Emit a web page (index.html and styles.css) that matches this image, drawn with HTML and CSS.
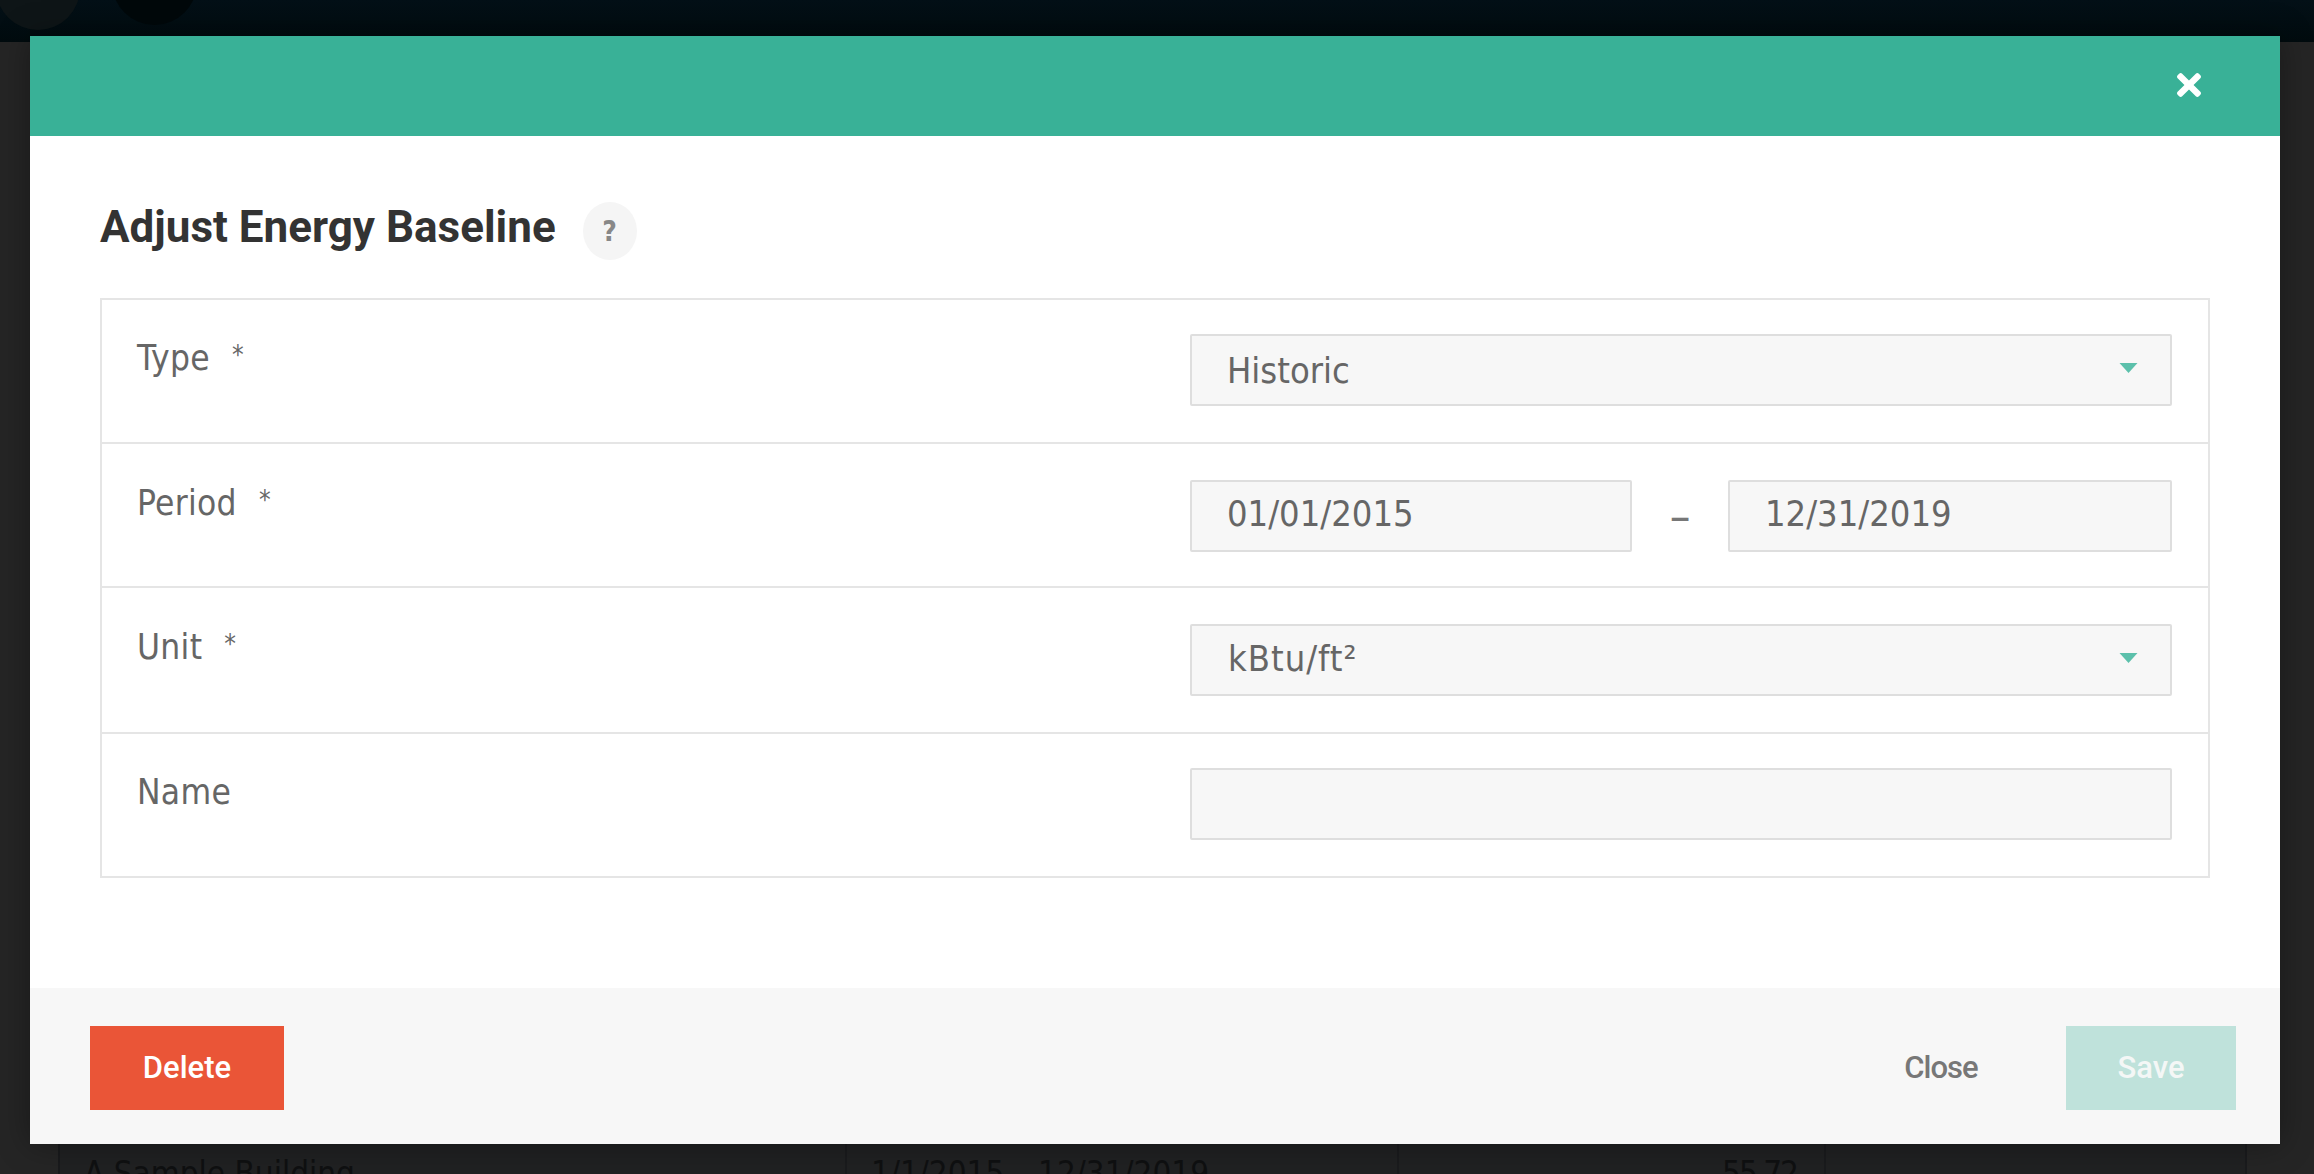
FILE: index.html
```html
<!DOCTYPE html>
<html lang="en">
<head>
<meta charset="utf-8">
<title>Adjust Energy Baseline</title>
<link rel="stylesheet" href="styles.css">
</head>
<body>
<div class="page">
  <header class="topbar">
    <span class="avatar avatar-a"></span>
    <span class="avatar avatar-b"></span>
  </header>
  <main class="backdrop">
    <div class="bg-table">
      <div class="bg-cell bg-name">A Sample Building</div>
      <div class="bg-cell bg-period">1/1/2015 – 12/31/2019</div>
      <div class="bg-cell bg-value">55.72</div>
      <div class="bg-cell bg-last"></div>
    </div>
  </main>
</div>
<section class="modal">
  <div class="modal-head">
    <svg class="close-x" viewBox="0 80 352 352"><path d="M242.72 256l100.07-100.07c12.28-12.28 12.28-32.19 0-44.48l-22.24-22.24c-12.28-12.28-32.19-12.28-44.48 0L176 189.28 75.93 89.21c-12.28-12.28-32.19-12.28-44.48 0L9.21 111.45c-12.28 12.28-12.28 32.19 0 44.48L109.28 256 9.21 356.07c-12.28 12.28-12.28 32.19 0 44.48l22.24 22.24c12.28 12.28 32.2 12.28 44.48 0L176 322.72l100.07 100.07c12.28 12.28 32.2 12.28 44.48 0l22.24-22.24c12.28-12.28 12.28-32.19 0-44.48L242.72 256z"/></svg>
  </div>
  <div class="modal-body">
    <div class="title-row">
      <h1 class="title">Adjust Energy Baseline</h1>
      <span class="help">?</span>
    </div>
    <div class="form">
      <div class="row">
        <div class="label">Type<span class="req">*</span></div>
        <div class="field"><div class="control select"><span>Historic</span><svg class="caret" viewBox="0 0 18 10"><path d="M0 0h18L9 10z"/></svg></div></div>
      </div>
      <div class="row">
        <div class="label">Period<span class="req">*</span></div>
        <div class="field dates">
          <input class="control date date-from" value="01/01/2015">
          <span class="dash">–</span>
          <input class="control date" value="12/31/2019">
        </div>
      </div>
      <div class="row">
        <div class="label">Unit<span class="req">*</span></div>
        <div class="field"><div class="control select unit"><span>kBtu/ft²</span><svg class="caret" viewBox="0 0 18 10"><path d="M0 0h18L9 10z"/></svg></div></div>
      </div>
      <div class="row">
        <div class="label">Name</div>
        <div class="field"><input class="control" value=""></div>
      </div>
    </div>
  </div>
  <footer class="modal-foot">
    <button class="btn btn-delete">Delete</button>
    <div class="foot-right">
      <button class="btn btn-close">Close</button>
      <button class="btn btn-save">Save</button>
    </div>
  </footer>
</section>
</body>
</html>
```
FILE: styles.css
```css
* { box-sizing: border-box; }
html, body { margin: 0; height: 100%; }
body {
  overflow: hidden;
  background: #252525;
  font-family: "DejaVu Sans Condensed", "DejaVu Sans", sans-serif;
  color: #666;
}
.page { height: 1174px; display: flex; flex-direction: column; }
.topbar {
  height: 42px;
  background: linear-gradient(#031017, #010b0e);
  display: flex;
  gap: 32px;
  overflow: hidden;
}
.avatar { border-radius: 50%; flex: none; }
.avatar-a { width: 84px; height: 84px; margin: -54px 0 0 -4px; background: #0e1517; }
.avatar-b { width: 85px; height: 85px; margin-top: -60px; background: #01080a; position: relative; }
.avatar-b::after {
  content: "";
  position: absolute;
  left: 20px;
  bottom: 25px;
  width: 43px;
  height: 2px;
  background: repeating-linear-gradient(90deg, #171d1f 0 9px, transparent 9px 17px);
}
.backdrop { flex: 1; display: flex; flex-direction: column; justify-content: flex-end; background: #252525; padding: 0 67px 0 58px; }
.bg-table {
  height: 60px;
  display: grid;
  grid-template-columns: 787px 552px 427px 421px;
  background: #202122;
  border-left: 2px solid #191a1c;
  overflow: hidden;
}
.bg-cell { padding: 40px 28px 0; font-size: 33px; line-height: 40px; color: #0f1011; border-right: 2px solid #1a1b1d; white-space: nowrap; }
.bg-name { padding-left: 24px; }
.bg-period { padding-left: 24px; }
.bg-value { text-align: right; letter-spacing: -2px; padding-right: 27px; }

.modal {
  position: absolute;
  left: 30px;
  top: 36px;
  width: 2250px;
  height: 1108px;
  background: #fff;
  display: flex;
  flex-direction: column;
  box-shadow: 0 0 30px rgba(0,0,0,.35);
}
.modal-head { height: 100px; background: #39b197; display: flex; align-items: center; justify-content: flex-end; padding-right: 79px; flex: none; }
.close-x { width: 24px; height: 24px; fill: #fff; margin-top: -3px; }
.modal-body { flex: 1; padding: 66px 70px 0; }
.title-row { display: flex; align-items: flex-start; gap: 27px; height: 96px; }
.title { margin: 0; font-family: Roboto, sans-serif; font-size: 44px; line-height: 50px; font-weight: 700; color: #333; white-space: nowrap; }
.help {
  width: 54px; height: 58px; border-radius: 50%; background: #f5f5f5;
  display: flex; align-items: center; justify-content: center;
  font-size: 28px; font-weight: 700; color: #888; flex: none;
}
.form { border: 2px solid #e5e5e5; width: 2110px; }
.row { display: flex; align-items: flex-start; justify-content: space-between; height: 144px; border-bottom: 2px solid #e5e5e5; padding: 0 36px 0 35px; }
.row:nth-child(3) { height: 146px; }
.row:last-child { border-bottom: 0; height: 142px; }
.label { font-size: 35px; line-height: 44px; letter-spacing: .3px; margin-top: 34px; }
.row:first-child .label { margin-top: 33px; }
.row:last-child .label { margin-top: 36px; }
.req { margin-left: 22px; font-size: 26px; vertical-align: 6px; }
.field { width: 982px; margin-top: 36px; }
.row:first-child .field, .row:last-child .field { margin-top: 34px; }
.dates { display: flex; align-items: flex-start; }
.control {
  display: block;
  width: 100%;
  height: 72px;
  background: #f7f7f7;
  border: 2px solid #dedede;
  border-radius: 2px;
  padding: 0 35px;
  font: inherit;
  font-size: 36px;
  color: #666;
  outline: 0;
}
.select { display: flex; align-items: center; justify-content: space-between; padding-right: 32px; }
.unit { padding: 0 32px 4px 36px; letter-spacing: 1px; }
.caret { width: 19px; height: 10px; fill: #5cc0ab; margin-bottom: 4px; }
.unit .caret { margin-bottom: 0; }
.date { flex: 1; width: 0; padding-bottom: 5px; }
.date-from { flex: none; width: 442px; }
.dash { width: 96px; flex: none; text-align: center; font-size: 46px; line-height: 72px; color: #777; }
.modal-foot {
  height: 156px; flex: none; background: #f7f7f7;
  display: flex; align-items: center; justify-content: space-between;
  padding: 4px 44px 0 60px;
}
.foot-right { display: flex; align-items: center; gap: 75px; }
.btn { height: 84px; border: 0; font-family: Roboto, sans-serif; font-size: 31px; font-weight: 500; cursor: pointer; padding: 0 0 2px; }
.btn-delete { width: 194px; background: #ea5537; color: #fff; }
.btn-close { background: none; color: #777; width: 100px; letter-spacing: -1px; }
.btn-save { width: 170px; background: #bfe2db; color: #f4f7f6; }
```
